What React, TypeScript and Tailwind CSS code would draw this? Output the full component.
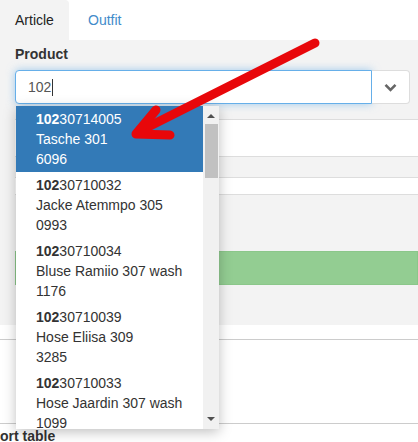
import React from "react";

const items = [
  { code: "30714005", name: "Tasche 301", num: "6096" },
  { code: "30710032", name: "Jacke Atemmpo 305", num: "0993" },
  { code: "30710034", name: "Bluse Ramiio 307 wash", num: "1176" },
  { code: "30710039", name: "Hose Eliisa 309", num: "3285" },
  { code: "30710033", name: "Hose Jaardin 307 wash", num: "1099" },
];

export default function App() {
  return (
    <div className="relative w-[418px] h-[442px] overflow-hidden bg-white text-[14px] text-[#333]" style={{ fontFamily: '"Liberation Sans", Arial, sans-serif' }}>
      {/* tabs */}
      <div className="flex h-[40px]">
        <div className="w-[69px] h-[40px] bg-[#f3f3f3] rounded-tr-[4px] flex items-center pl-[15px] text-[#222]">Article</div>
        <div className="h-[40px] flex items-center pl-[19px] text-[#428bca]">Outfit</div>
      </div>
      {/* panel */}
      <div className="h-[285px] bg-[#f3f3f3] pt-[4px] pl-[15px]">
        <div className="font-bold leading-[20px] mb-[6px]">Product</div>
        <div className="flex w-[395px] h-[34px]">
          <div className="flex-1 h-[34px] bg-white border border-[#66afe9] rounded-l-[4px] shadow-[0_0_8px_rgba(102,175,233,0.6)] flex items-center pl-[12px] text-[#555]">
            102<span className="inline-block w-px h-[17px] bg-[#333] ml-px" />
          </div>
          <div className="w-[38px] h-[34px] bg-white border border-l-0 border-[#ddd] rounded-r-[4px] flex items-center justify-center">
            <svg width="13" height="9" viewBox="0 0 13 9">
              <path d="M1.5 1.8 L6.5 6.8 L11.5 1.8" fill="none" stroke="#666" strokeWidth="2.6" />
            </svg>
          </div>
        </div>
        <div className="mt-[15px] h-[38px] bg-white border-y border-[#ddd]" />
        <div className="mt-[20px] h-[18px] bg-white border-y border-[#ddd]" />
        <div className="mt-[56px] h-[34px] bg-[#93cd92] border border-[#8bc78a]" />
      </div>
      {/* lower area */}
      <div className="mt-[14px] h-[85px] border-y border-[#ccc]" />
      <div className="font-bold leading-[20px] mt-[2px]">ort table</div>

      {/* dropdown */}
      <div className="absolute left-[16px] top-[106px] w-[203px] h-[323px] bg-white shadow-[0_3px_12px_rgba(0,0,0,0.25)] flex overflow-hidden">
        <div className="flex-1">
          {items.map((it, i) => (
            <div key={i} className={(i === 0 ? "bg-[#337ab7] text-white " : "text-[#333] ") + "pl-[20px] pt-[3px] pb-[3px] leading-[20px]"}>
              <div><b>102</b>{it.code}</div>
              <div className="whitespace-nowrap">{it.name}</div>
              <div>{it.num}</div>
            </div>
          ))}
        </div>
        <div className="w-[16px] h-full bg-[#f1f1f1] relative shrink-0">
          <svg className="absolute left-[4px] top-[7px]" width="8" height="5" viewBox="0 0 8 5">
            <path d="M0 5 L4 1 L8 5 Z" fill="#505050" />
          </svg>
          <div className="absolute left-[2px] top-[18px] w-[13px] h-[54px] bg-[#c1c1c1]" />
          <svg className="absolute left-[4px] bottom-[7px]" width="8" height="5" viewBox="0 0 8 5">
            <path d="M0 0 L4 4 L8 0 Z" fill="#505050" />
          </svg>
        </div>
      </div>

      {/* red arrow */}
      <svg className="absolute left-0 top-0 pointer-events-none" width="418" height="442" viewBox="0 0 418 442">
        <g stroke="#e8070a" strokeWidth="9" strokeLinecap="round" strokeLinejoin="round" fill="none">
          <path d="M315 43 L142 130" />
          <path d="M156 110 L136 134 L170 135" />
        </g>
      </svg>
    </div>
  );
}
